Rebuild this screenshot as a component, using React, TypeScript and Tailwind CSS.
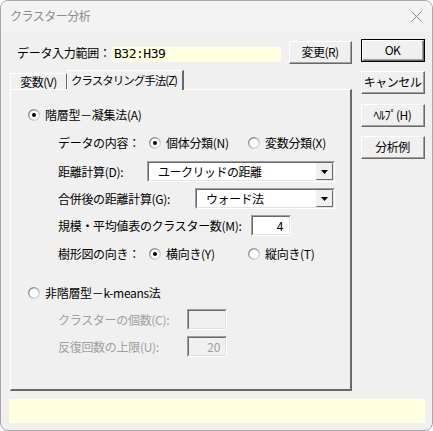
import React from "react";

const font = "font-['Noto_Sans_CJK_JP','Noto_Sans_CJK_SC',sans-serif]";

function Radio({ checked, disabled }: { checked?: boolean; disabled?: boolean }) {
  return (
    <svg width="12" height="12" viewBox="0 0 12 12" className="shrink-0">
      <defs>
        <linearGradient id="rg" x1="0" y1="0" x2="1" y2="1">
          <stop offset="0" stopColor="#7a7a7a" />
          <stop offset="1" stopColor="#e8e8e8" />
        </linearGradient>
      </defs>
      <circle cx="6" cy="6" r="5.3" fill="#ffffff" stroke="url(#rg)" strokeWidth="1.4" />
      {checked && <circle cx="6" cy="6" r="2" fill={disabled ? "#a0a0a0" : "#000"} />}
    </svg>
  );
}

function Btn({ label, def, className = "" }: { label: string; def?: boolean; className?: string }) {
  return (
    <div className={`h-[23px] ${def ? "border border-black" : ""} ${className}`}>
      <div className="h-full w-full border-t border-l border-t-white border-l-white border-b border-r border-b-[#696969] border-r-[#696969] flex">
        <div className="flex-1 flex items-center justify-center border-b border-r border-b-[#a0a0a0] border-r-[#a0a0a0] text-[12px] text-black tracking-[-0.5px] whitespace-nowrap">
          {label}
        </div>
      </div>
    </div>
  );
}

function Sunken({ className = "", children }: { className?: string; children?: React.ReactNode }) {
  return (
    <div className={`border-t border-l border-t-[#a0a0a0] border-l-[#a0a0a0] border-b border-r border-b-white border-r-white ${className}`}>
      <div className="h-full w-full border-t border-l border-t-[#696969] border-l-[#696969] border-b border-r border-b-[#e3e3e3] border-r-[#e3e3e3] bg-white flex items-center">
        {children}
      </div>
    </div>
  );
}

function Combo({ text, className = "" }: { text: string; className?: string }) {
  return (
    <Sunken className={`h-[21px] ${className}`}>
      <div className="flex-1 pl-[9px] text-[12px] text-black tracking-[-0.5px] whitespace-nowrap">{text}</div>
      <div className="w-[17px] h-full border-t border-l border-t-[#f0f0f0] border-l-[#f0f0f0] border-b border-r border-b-[#696969] border-r-[#696969] bg-[#f0f0f0] flex items-center justify-center">
        <svg width="7" height="4" viewBox="0 0 7 4">
          <path d="M0 0 H7 L3.5 4 Z" fill="#000" />
        </svg>
      </div>
    </Sunken>
  );
}

export default function App() {
  return (
    <div className={`w-[433px] h-[431px] bg-white ${font}`}>
      <div className="w-[433px] h-[431px] border border-[#a8a8a8] rounded-[8px] bg-[#f0f0f0] flex flex-col overflow-hidden">
        {/* title bar */}
        <div className="h-[30px] bg-[#f3f3f3] flex items-center justify-between pl-[9px] pr-[10px]">
          <span className="text-[12px] text-[#8c8c8c] tracking-[-0.5px]">クラスター分析</span>
          <svg width="11" height="11" viewBox="0 0 11 11">
            <path d="M0.5 0.5 L10.5 10.5 M10.5 0.5 L0.5 10.5" stroke="#8a8a8a" strokeWidth="1" />
          </svg>
        </div>
        {/* body */}
        <div className="flex-1 flex flex-col pt-[8px]">
          <div className="flex">
            {/* left column */}
            <div className="ml-[9px] w-[342px] pt-[2px] flex flex-col">
              <div className="flex items-center h-[23px]">
                <span className="w-[102px] pl-[7px] text-[12px] text-black tracking-[-0.3px] whitespace-nowrap">データ入力範囲：</span>
                <div className="w-[169px] h-[15px] mt-[3px] bg-[#ffffe1] flex items-center pl-[2px] text-[13px] font-['DejaVu_Sans_Mono',monospace] text-black tracking-[-0.5px]">
                  B32:H39
                </div>
                <Btn label="変更(R)" className="w-[63px] ml-[8px]" />
              </div>
              {/* tabs */}
              <div className="flex items-end h-[21px] mt-[4px]">
                <div className="w-[57px] h-[16px] border-t border-l border-t-white border-l-white border-r border-r-[#696969] flex items-center justify-center text-[12px] text-black tracking-[-0.5px] whitespace-nowrap">
                  変数(V)
                </div>
                <div className="relative top-[1px] w-[117px] h-[20px] bg-[#f0f0f0] border-t border-l border-t-white border-l-white border-r-2 border-r-[#696969] flex items-start pt-[1px] pl-[3px] text-[11.5px] text-black tracking-[-1px] whitespace-nowrap z-10">
                  クラスタリング手法(Z)
                </div>
              </div>
              {/* panel */}
              <div className="h-[302px] border-t border-l border-t-white border-l-white border-r-2 border-b-2 border-r-[#696969] border-b-[#696969] flex flex-col text-[12px] text-black tracking-[-0.3px] whitespace-nowrap">
                <div className="flex items-center h-[20px] mt-[15px] pl-[17px]">
                  <Radio checked />
                  <span className="ml-[5px]">階層型－凝集法(A)</span>
                </div>
                <div className="flex items-center h-[20px] mt-[8px] pl-[47px]">
                  <span className="w-[91px]">データの内容：</span>
                  <Radio checked />
                  <span className="ml-[5px] w-[82px]">個体分類(N)</span>
                  <Radio />
                  <span className="ml-[5px]">変数分類(X)</span>
                </div>
                <div className="flex items-center h-[21px] mt-[8px] pl-[47px]">
                  <span className="w-[89px]">距離計算(D):</span>
                  <Combo text="ユークリッドの距離" className="w-[188px]" />
                </div>
                <div className="flex items-center h-[21px] mt-[6px] pl-[47px]">
                  <span className="w-[137px]">合併後の距離計算(G):</span>
                  <Combo text="ウォード法" className="w-[140px]" />
                </div>
                <div className="flex items-center h-[21px] mt-[6px] pl-[47px]">
                  <span className="w-[193px]">規模・平均値表のクラスター数(M):</span>
                  <Sunken className="w-[40px] h-[21px]">
                    <span className="flex-1 text-right pr-[6px]">4</span>
                  </Sunken>
                </div>
                <div className="flex items-center h-[20px] mt-[8px] pl-[47px]">
                  <span className="w-[91px]">樹形図の向き：</span>
                  <Radio checked />
                  <span className="ml-[5px] w-[82px]">横向き(Y)</span>
                  <Radio />
                  <span className="ml-[5px]">縦向き(T)</span>
                </div>
                <div className="flex items-center h-[20px] mt-[19px] pl-[17px]">
                  <Radio />
                  <span className="ml-[5px]">非階層型－k-means法</span>
                </div>
                <div className="flex items-center h-[21px] mt-[6px] pl-[47px] text-[#a0a0a0]">
                  <span className="w-[129px]">クラスターの個数(C):</span>
                  <div className="w-[40px] h-[21px] border-t border-l border-t-[#a0a0a0] border-l-[#a0a0a0] border-b border-r border-b-white border-r-white">
                    <div className="h-full w-full border-t border-l border-t-[#696969] border-l-[#696969] border-b border-r border-b-[#e3e3e3] border-r-[#e3e3e3] bg-[#f0f0f0]" />
                  </div>
                </div>
                <div className="flex items-center h-[21px] mt-[6px] pl-[47px] text-[#a0a0a0]">
                  <span className="w-[129px]">反復回数の上限(U):</span>
                  <div className="w-[40px] h-[21px] border-t border-l border-t-[#a0a0a0] border-l-[#a0a0a0] border-b border-r border-b-white border-r-white">
                    <div className="h-full w-full border-t border-l border-t-[#696969] border-l-[#696969] border-b border-r border-b-[#e3e3e3] border-r-[#e3e3e3] bg-[#f0f0f0] flex items-center justify-end pr-[5px]">
                      20
                    </div>
                  </div>
                </div>
              </div>
            </div>
            {/* right column */}
            <div className="ml-[9px] w-[64px] flex flex-col">
              <Btn label="OK" def className="w-[64px]" />
              <Btn label="キャンセル" className="w-[64px] mt-[9px]" />
              <Btn label="ﾍﾙﾌﾟ(H)" className="w-[64px] mt-[10px]" />
              <Btn label="分析例" className="w-[64px] mt-[9px]" />
            </div>
          </div>
          <div className="ml-[8px] mt-[8px] w-[416px] h-[24px] bg-[#ffffe1]" />
        </div>
      </div>
    </div>
  );
}
